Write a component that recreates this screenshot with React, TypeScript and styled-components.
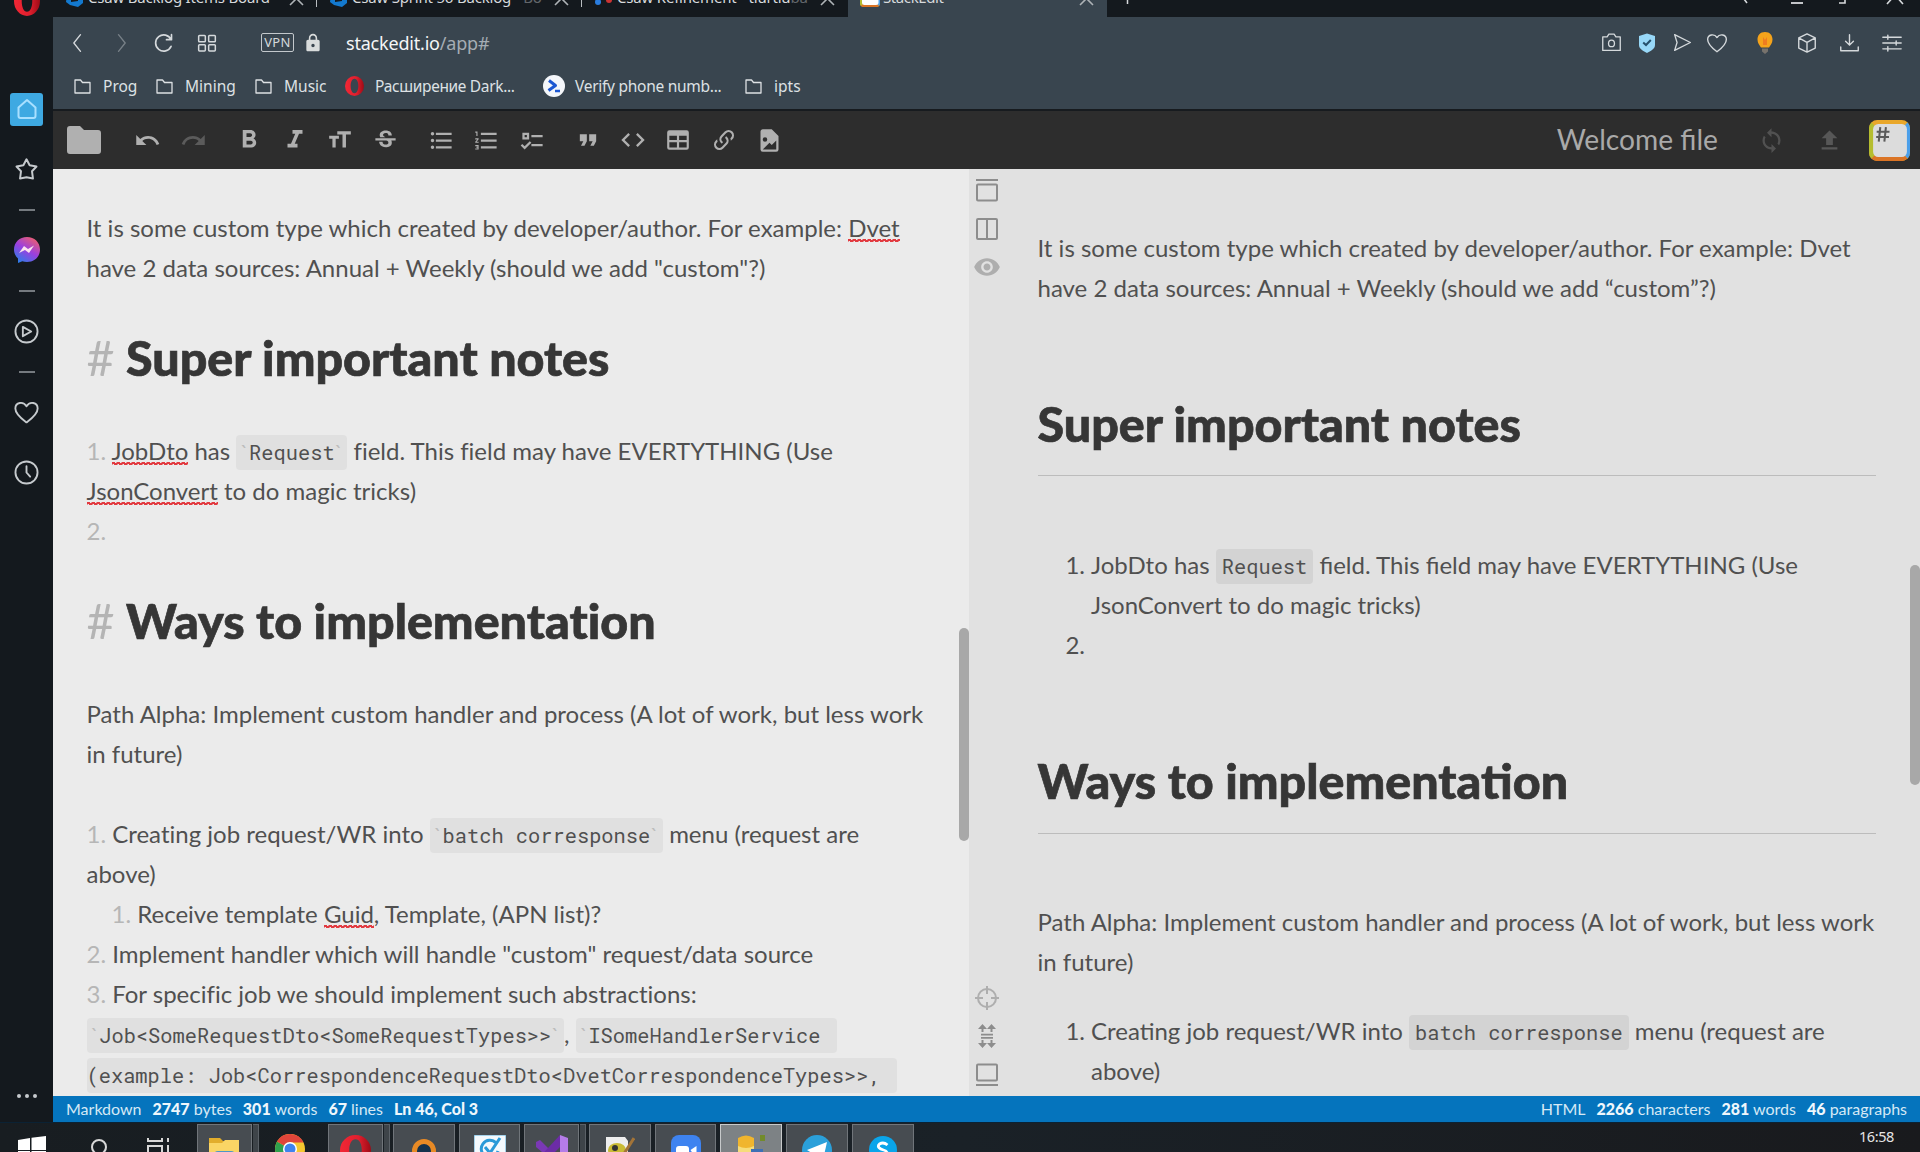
import React from "react";
import styled, { createGlobalStyle, css } from "styled-components";
import {
  MdUndo, MdRedo, MdFormatBold, MdFormatItalic, MdStrikethroughS,
  MdFormatListBulleted, MdFormatListNumbered, MdFormatQuote, MdCode, MdRemoveRedEye, MdSync,
  MdLock,
} from "react-icons/md";

const ui = `"Noto Sans", "Open Sans", sans-serif`;
const lato = `Lato, "Open Sans", sans-serif`;
const mono = `"Roboto Mono", "DejaVu Sans Mono", monospace`;

const Global = createGlobalStyle`
  * { box-sizing: border-box; }
  html, body { margin: 0; height: 1152px; overflow: hidden; background: #14181c; }
  svg { display: block; flex: none; }
`;

const Screen = styled.div`
  width: 1920px; height: 1152px; display: flex; flex-direction: column; overflow: hidden;
`;
const Browser = styled.div`
  height: 1122px; display: flex; background: #14191e;
`;
const Side = styled.nav`
  width: 53px; flex: none; display: flex; flex-direction: column; align-items: center;
  overflow: hidden; color: #c6cace;
`;
const SideSlot = styled.div<{ $h: number }>`
  height: ${(p) => p.$h}px; width: 52px; display: flex; align-items: center; justify-content: center; flex: none;
`;
const SideLogo = styled.div`margin-top: -12px;`;
const Dash = styled.div`width: 16px; height: 2px; background: #757a7f;`;
const HomeTile = styled.div`
  width: 33px; height: 33px; border-radius: 3px; background: #3ea9e2; display: grid; place-items: center;
`;
const Spacer = styled.div`flex: 1;`;
const Gap = styled.div<{ $h: number }>`height: ${(p) => p.$h}px; flex: none;`;
const Main = styled.div`flex: 1; display: flex; flex-direction: column; min-width: 0;`;

const Tabs = styled.div`
  height: 17px; flex: none; display: flex; overflow: hidden; background: #14191e; color: #d7dadd;
  font: 15px/24px ${ui};
`;
const Tab = styled.div<{ $w: number; $active?: boolean; $sep?: boolean }>`
  width: ${(p) => p.$w}px; height: 17px; flex: none; display: flex; align-items: flex-start; padding-left: 12px;
  position: relative; background: ${(p) => (p.$active ? "#39454f" : "transparent")};
  ${(p) => p.$sep && css`&::after { content: ""; position: absolute; right: 0; top: 0; width: 1px; height: 7px; background: #b9bdc1; }`}
`;
const TabLabel = styled.span<{ $ls?: number }>`
  margin: -15px 0 0 3px; white-space: nowrap; letter-spacing: ${(p) => p.$ls ?? 0}px;
  i { font-style: normal; opacity: 0.4; }
`;
const TabIcon = styled.div`margin-top: -13px; width: 20px; height: 20px;`;
const TabClose = styled.div`margin-top: -10px; margin-left: auto; padding-right: 12px; color: #aeb3b7;`;
const WinButtons = styled.div`
  margin-left: auto; display: flex; height: 17px; width: 190px; justify-content: space-between; padding: 0 16px 0 12px;
`;

const AddressBar = styled.div`
  height: 51px; flex: none; background: #39454f; display: flex; align-items: center; color: #d5d9dc;
`;
const Slot = styled.div<{ $w: number; $opacity?: number }>`
  width: ${(p) => p.$w}px; flex: none; display: flex; justify-content: center; align-items: center;
  opacity: ${(p) => p.$opacity ?? 1};
`;
const Vpn = styled.div`
  width: 33px; height: 19px; border: 1px solid #c3c8cc; border-radius: 2px; font: 13px/17px ${ui};
  text-align: center; letter-spacing: 0.4px; margin-left: 36px; flex: none; margin-top: -1px;
`;
const Url = styled.div`
  font: 18px/24px ${ui}; color: #f4f6f7; letter-spacing: -0.2px; margin-left: 14px; white-space: nowrap;
  span { color: #a5adb4; }
`;
const Bookmarks = styled.div`
  height: 41px; flex: none; background: #39454f; display: flex; align-items: center; padding: 0 0 5px 21px;
  font: 15.5px/20px ${ui}; color: #dde1e4;
`;
const Bookmark = styled.div<{ $w: number; $gap: number; $ls?: number }>`
  width: ${(p) => p.$w}px; flex: none; display: flex; align-items: center; gap: ${(p) => p.$gap}px; white-space: nowrap;
  letter-spacing: ${(p) => p.$ls ?? 0}px;
`;

const Toolbar = styled.div`
  height: 60px; flex: none; background: #2d2d2d; border-top: 2px solid #171b1f; display: flex; align-items: center;
  color: #b0b0b0;
`;
const Title = styled.div`
  font: 28.2px/40px ${lato}; color: #a9a9a9; margin: -2px 24px 0 auto; white-space: nowrap;
`;

const Work = styled.div`height: 927px; flex: none; display: flex; overflow: hidden;`;
const Editor = styled.section`
  width: 916px; flex: none; background: #ebebeb; padding: 39px 0 0 33.5px; position: relative; overflow: hidden;
  font-variant-ligatures: none;
`;
const Nav = styled.aside`
  width: 36px; flex: none; display: flex; flex-direction: column; align-items: center; color: #8d8d8d;
  padding: 2px 0 2px;
`;
const NavSlot = styled.div<{ $faint?: boolean }>`
  height: 38.4px; display: grid; place-items: center; flex: none; opacity: ${(p) => (p.$faint ? 0.6 : 1)};
`;
const Preview = styled.section`
  flex: 1; display: flex; background: #e1e1e1; position: relative; overflow: hidden;
`;
const Article = styled.article`width: 838px; margin-left: 32.5px; padding-top: 59px; flex: none;`;
const Thumb = styled.div<{ $top: number; $h: number }>`
  position: absolute; right: 0; top: ${(p) => p.$top}px; height: ${(p) => p.$h}px; width: 10px; border-radius: 5px;
  background: #a8a8a8;
`;
const Line = styled.div<{ $indent?: number }>`
  height: 40px; font-family: ${lato}; font-size: 24px; line-height: 40px; color: #505050; white-space: pre;
  padding-left: ${(p) => p.$indent ?? 0}px;
`;
const Heading = styled.h1<{ $top: number; $bottom: number }>`
  margin: ${(p) => p.$top}px 0 ${(p) => p.$bottom}px; height: 63px; font-family: ${lato}; font-weight: 900;
  font-size: 48.4px; line-height: 63px; color: #363636; white-space: pre; -webkit-text-stroke: 0.7px #363636;
  span { font-weight: 400; color: #b4b4b4; -webkit-text-stroke: 0; }
`;
const Rule = styled.hr`border: 0; height: 1px; margin: 0; background: #bcbcbc;`;
const Mark = styled.span`color: #b6b6b6;`;
const Typo = styled.span`
  background-image:
    linear-gradient(45deg, transparent 36%, #e23a40 36%, #e23a40 64%, transparent 64%),
    linear-gradient(-45deg, transparent 36%, #e23a40 36%, #e23a40 64%, transparent 64%);
  background-size: 5px 3px, 5px 3px;
  background-position: 0 100%, 2.5px 100%;
  background-repeat: repeat-x;
`;
const Code = styled.code<{ $cont?: boolean; $dark?: boolean }>`
  font-family: ${mono}; font-size: 20.36px; line-height: 28px;
  background: ${(p) => (p.$dark ? "#d3d3d3" : "#e0e0e0")};
  border-radius: 4px; padding: 4px ${(p) => (p.$dark ? 6 : 4)}px 4px ${(p) => (p.$cont ? 0 : p.$dark ? 6 : 4)}px;
`;
const Tick = styled.span`color: #bcbcbc; font-family: ${lato}; letter-spacing: 0.6px;`;
const List = styled.ol`margin: 0; padding: 0; list-style: none;`;
const Item = styled.li`display: flex;`;
const Num = styled.span`
  width: 53.5px; padding-right: 6px; text-align: right; font: 24px/40px ${lato}; color: #505050; flex: none;
`;

const Status = styled.div`
  height: 26px; flex: none; background: #0574bd; color: #d5e9f5; font: 16px/26px ${lato}; display: flex;
  justify-content: space-between; padding: 0 13px;
  div { display: flex; gap: 11px; white-space: pre; }
  b { font-weight: 900; color: #eef7fc; }
`;

const Taskbar = styled.footer`
  height: 30px; flex: none; display: flex; background: linear-gradient(90deg, #181d21, #1a2127 50%, #191a1d);
  overflow: hidden; border-top: 1px solid #0b2234;
`;
const Task = styled.div<{ $w: number; $gap?: number; $open?: boolean; $active?: boolean; $stack?: boolean }>`
  width: ${(p) => p.$w}px; margin-right: ${(p) => p.$gap ?? 0}px; height: 40px; flex: none; display: flex;
  justify-content: center; padding-top: 10px; position: relative; margin-top: 1px;
  ${(p) => p.$open && css`background: #474c51; border: 1px solid #70757a; border-bottom: 0;`}
  ${(p) => p.$active && css`background: #7d8285; border-color: #c7cacb;`}
  ${(p) => p.$stack && css`&::after { content: ""; position: absolute; left: 100%; margin-left: 2px; top: -1px; width: 5px; height: 40px; background: #3e4449; border: 1px solid #5b6167; border-left: 0; }`}
`;
const Clock = styled.div`margin: 3px 26px 0 auto; font: 14.5px/20px ${ui}; color: #e5e5e5; letter-spacing: -0.4px;`;

const L = ({ s = 22, w = 1.6, children }: { s?: number; w?: number; children: React.ReactNode }) => (
  <svg width={s} height={s} viewBox="0 0 24 24" fill="none" stroke="currentColor" strokeWidth={w} strokeLinejoin="round" strokeLinecap="round">{children}</svg>
);
const FolderLine = () => (
  <svg width="17" height="15" viewBox="0 0 17 15" fill="none" stroke="currentColor" strokeWidth="1.3" strokeLinejoin="round"><path d="M1 1h5.5l2 2.500H16V14H1z" /></svg>
);
const OperaO = ({ w, h }: { w: number; h: number }) => (
  <svg width={w} height={h} viewBox="0 0 32 32" preserveAspectRatio="none">
    <defs><linearGradient id="op" x1="0" x2="1"><stop offset="0" stopColor="#f32735" /><stop offset=".6" stopColor="#df1f2e" /><stop offset="1" stopColor="#9d0b16" /></linearGradient></defs>
    <path fill="url(#op)" fillRule="evenodd" d="M16 0a16 16 0 1 0 0 32 16 16 0 0 0 0-32zm0 4.500c4 0 6.500 5 6.500 11.500S20 27.500 16 27.500 9.500 22.500 9.500 16 12 4.500 16 4.500z" />
  </svg>
);
const Azure = () => (
  <svg width="20" height="20" viewBox="0 0 20 20"><path fill="#1379cf" d="M2 6l8-5 8 1v14l-5 4-8-2-4-3z" /><path d="M6 6l7-1v9l-7 1z" fill="#14191e" /></svg>
);
const Cross = () => (
  <svg width="17" height="17" viewBox="0 0 17 17" stroke="currentColor" strokeWidth="1.6"><path d="M2 2l13 13M15 2L2 15" /></svg>
);
const StackLogo = ({ s, id }: { s: number; id: string }) => (
  <svg width={s} height={s} viewBox="0 0 40 40">
    <defs><clipPath id={id}><rect width="40" height="40" rx="8" /></clipPath></defs>
    <g clipPath={`url(#${id})`}>
      <rect width="40" height="40" fill="#e9a72a" />
      <path d="M0 0l8 8v24l-8 8z" fill="#b5bd2f" /><path d="M40 0l-8 8v24l8 8z" fill="#4b9fea" /><path d="M0 40l8-8h24l8 8z" fill="#db7425" />
      <rect x="4" y="4" width="33" height="32" rx="5" fill={s > 30 ? "#dcdcdc" : "#ffffff"} />
    </g>
    {s > 30 && <path d="M11 7l-1.500 14M16.500 7l-1.500 14M7.500 11.500h12.500M7 16.500h12.500" stroke="#5b5b5b" strokeWidth="2" fill="none" />}
  </svg>
);

const SideBar = () => (
  <Side>
    <SideSlot $h={14}><SideLogo><OperaO w={26} h={30} /></SideLogo></SideSlot>
    <SideSlot $h={70} />
    <SideSlot $h={50}><HomeTile><L s={24} w={2}><path d="M3.500 10.500L12 3l8.500 7.500V19a2 2 0 0 1-2 2h-13a2 2 0 0 1-2-2z" stroke="#a8e0ff" /></L></HomeTile></SideSlot>
    <SideSlot $h={71}><L s={25} w={1.9}><path d="M12 2.200l3 5.700 6.600 1.200-4.300 4.600.9 7-6.200-1.200-6.200 1.200.9-7L2.400 9.100 9 7.900z" /></L></SideSlot>
    <SideSlot $h={10}><Dash /></SideSlot>
    <SideSlot $h={70}>
      <svg width="28" height="28" viewBox="0 0 28 28">
        <defs><linearGradient id="ms" x1=".2" y1="1" x2=".8" y2="0"><stop offset="0" stopColor="#2a7fe8" /><stop offset=".5" stopColor="#9a3fe0" /><stop offset="1" stopColor="#f0606a" /></linearGradient></defs>
        <path fill="url(#ms)" d="M14 1C6.500 1 1 6.300 1 13.500c0 3.800 1.500 6.700 4 8.900V27l4.300-1.800c1.500.5 3 .8 4.700.8 7.500 0 13-5.300 13-12.500S21.500 1 14 1z" />
        <path fill="#fbe3ee" d="M6 17l5-7 4 3 6-3.500-5 7.500-4-3z" />
      </svg>
    </SideSlot>
    <SideSlot $h={12}><Dash /></SideSlot>
    <SideSlot $h={69}><L s={25} w={1.8}><circle cx="12" cy="12" r="10.600" /><path d="M8.500 7.500l8 4.500-8 4.500z" /></L></SideSlot>
    <SideSlot $h={12}><Dash /></SideSlot>
    <SideSlot $h={69}><L s={25} w={1.8}><path d="M12 21.500C8 18.500 1.300 14 1.300 8.200 1.300 2 9 1 12 6c3-5 10.700-4 10.700 2.200C22.700 14 16 18.500 12 21.500z" /></L></SideSlot>
    <SideSlot $h={51}><L s={25} w={1.8}><circle cx="12" cy="12" r="10.600" /><path d="M12 6v6l3.500 4" /></L></SideSlot>
    <Spacer />
    <SideSlot $h={52}><svg width="22" height="6" viewBox="0 0 22 6" fill="currentColor"><circle cx="3" cy="3" r="2" /><circle cx="11" cy="3" r="2" /><circle cx="19" cy="3" r="2" /></svg></SideSlot>
  </Side>
);

const TabStrip = () => (
  <Tabs>
    <Tab $w={264} $sep><TabIcon><Azure /></TabIcon><TabLabel $ls={-0.2}>Csaw Backlog Items Board</TabLabel><TabClose><Cross /></TabClose></Tab>
    <Tab $w={265} $sep><TabIcon><Azure /></TabIcon><TabLabel $ls={-0.2}>Csaw Sprint 56 Backlog <i>- Bo</i></TabLabel><TabClose><Cross /></TabClose></Tab>
    <Tab $w={266}>
      <TabIcon><svg width="20" height="20" viewBox="0 0 20 20"><circle cx="4" cy="15" r="3" fill="#2a7de0" /><circle cx="15" cy="13" r="3" fill="#c33" /></svg></TabIcon>
      <TabLabel $ls={-0.2}>Csaw Refinement - tiurtiu<i>ba</i></TabLabel><TabClose><Cross /></TabClose>
    </Tab>
    <Tab $w={259} $active><TabIcon><StackLogo s={20} id="tabl" /></TabIcon><TabLabel $ls={-0.4}>StackEdit</TabLabel><TabClose><Cross /></TabClose></Tab>
    <Tab $w={40}><svg width="20" height="8" viewBox="0 0 20 8" stroke="currentColor" strokeWidth="1.500"><path d="M8.500 0v4" /></svg></Tab>
    <WinButtons>
      <svg width="16" height="8" fill="none" stroke="currentColor" strokeWidth="1.600"><path d="M-1-5l6 8" /></svg>
      <svg width="16" height="8" stroke="currentColor" strokeWidth="1.800"><path d="M-4 3h16" /></svg>
      <svg width="14" height="8" fill="none" stroke="currentColor" strokeWidth="1.600"><path d="M-5-8v11h11V-8" /></svg>
      <svg width="18" height="8" fill="none" stroke="currentColor" strokeWidth="1.600"><path d="M1 4l8-9 8 9" /></svg>
    </WinButtons>
  </Tabs>
);

const Address = () => (
  <AddressBar>
    <Slot $w={50}><L s={20}><path d="M15 2L7 12l8 10" /></L></Slot>
    <Slot $w={36} $opacity={0.4}><L s={20}><path d="M9 2l8 10L9 22" /></L></Slot>
    <Slot $w={50}><L s={20} w={2}><path d="M20.500 16a9.700 9.700 0 1 1 0-8M21 2v6h-6" /></L></Slot>
    <Slot $w={36}><L s={20} w={1.8}><rect x="2" y="3" width="8" height="7.500" rx="1" /><rect x="14" y="3" width="8" height="7.500" rx="1" /><rect x="2" y="14" width="8" height="7.500" rx="1" /><rect x="14" y="14" width="8" height="7.500" rx="1" /></L></Slot>
    <Vpn>VPN</Vpn>
    <Slot $w={38}><MdLock size={20} color="#d9dcdc" /></Slot>
    <Url>stackedit.io<span>/app#</span></Url>
    <Spacer />
    <Slot $w={38}><L s={21} w={1.5}><path d="M2 5.500h5L9 2.500h6l2 3h5V21H2z" /><ellipse cx="12" cy="13" rx="3.400" ry="3.800" /></L></Slot>
    <Slot $w={33}><svg width="18" height="20" viewBox="0 0 18 20"><path fill="#98d8f8" d="M9 .5L17 3v9c0 4-4.500 6-8 8-3.500-2-8-4-8-8V3z" /><path d="M5.200 9.500L8 12l4.800-5" stroke="#26506c" strokeWidth="2" fill="none" /></svg></Slot>
    <Slot $w={38}><L s={21} w={1.5}><path d="M3 3l18 9-18 9 2.800-9z" /></L></Slot>
    <Slot $w={31}><L s={22} w={1.5}><path d="M12 21.500C8 18.500 1.800 14 1.800 8.200 1.800 2.500 9 1.500 12 6c3-4.500 10.200-3.500 10.200 2.200C22.200 14 16 18.500 12 21.500z" /></L></Slot>
    <Slot $w={65}><svg width="18" height="22" viewBox="0 0 18 22"><path fill="#f5a31b" d="M9 0c5 0 7.500 3.500 7.500 7.500 0 3.500-2 5.500-3.500 8H5c-1.500-2.500-3.500-4.500-3.500-8C1.500 3.500 4 0 9 0z" /><path d="M7 5l2 3 2-3v8H7z" fill="#ee7c20" /><path fill="#77726c" d="M6 16.500h6v3L9 22l-3-2.500z" /></svg></Slot>
    <Slot $w={19}><L s={22} w={1.5}><path d="M12 2l9 4.500v11L12 22l-9-4.500v-11zM3 6.500l9 4.800 9-4.800M12 11.300V22" /></L></Slot>
    <Slot $w={66}><L s={21} w={1.6}><path d="M12 3v12M7.500 10.500L12 15l4.500-4.500M2 17v4.500h20V17" /></L></Slot>
    <Slot $w={20}><L s={20} w={1.7}><path d="M1 5h22M1 12h22M1 19h22M7 2.500v5M17 9.500v5M7 16.500v5" /></L></Slot>
    <Slot $w={18} />
  </AddressBar>
);

const BookmarkBar = () => (
  <Bookmarks>
    <Bookmark $w={82} $gap={12}><FolderLine />Prog</Bookmark>
    <Bookmark $w={99} $gap={12}><FolderLine />Mining</Bookmark>
    <Bookmark $w={90} $gap={12}><FolderLine />Music</Bookmark>
    <Bookmark $w={198} $gap={11} $ls={-0.33}><OperaO w={19} h={20} />Расширение Dark...</Bookmark>
    <Bookmark $w={202} $gap={10} $ls={-0.27}>
      <svg width="22" height="22" viewBox="0 0 22 22"><circle cx="11" cy="11" r="11" fill="#f4f6fa" /><path d="M6 5.500l6.500 5-7 5" stroke="#1c57d2" strokeWidth="3" fill="none" strokeLinejoin="round" /><path d="M12 16h5" stroke="#1c57d2" strokeWidth="2.500" /></svg>
      Verify phone numb...
    </Bookmark>
    <Bookmark $w={80} $gap={12}><FolderLine />ipts</Bookmark>
  </Bookmarks>
);

const SizeIcon = () => (
  <svg width="26" height="26" viewBox="0 0 24 24" fill="currentColor"><path d="M2 8h9v2.800H8V19H5v-8.200H2zM9.500 4H22v3h-4.500v12h-3.200V7H9.500z" /></svg>
);
const ChecksIcon = () => (
  <svg width="27" height="27" viewBox="0 0 24 24" fill="currentColor"><path fillRule="evenodd" d="M3 5h6v6H3zm2 2v2h2V7zM11 7h10v2H11zM11 15h10v2H11zM5 20l-3.500-3.500 1.410-1.410L5 17.170l4.590-4.580L11 14z" /></svg>
);
const TableIcon = () => (
  <svg width="26" height="26" viewBox="0 0 24 24" fill="currentColor"><path d="M4 3h16a2 2 0 0 1 2 2v14a2 2 0 0 1-2 2H4a2 2 0 0 1-2-2V5a2 2 0 0 1 2-2zm0 5v4h7V8zm9 0v4h7V8zm-9 6v5h7v-5zm9 0v5h7v-5z" fillRule="evenodd" /></svg>
);
const LinkIcon = () => (
  <svg width="26" height="26" viewBox="0 0 24 24" fill="currentColor"><path d="M10.590 13.410c.41.390.41 1.030 0 1.420-.39.390-1.030.390-1.420 0a5.003 5.003 0 0 1 0-7.070l3.540-3.540a5.003 5.003 0 0 1 7.070 0 5.003 5.003 0 0 1 0 7.070l-1.490 1.490c.01-.82-.12-1.640-.4-2.420l.47-.48a2.982 2.982 0 0 0 0-4.240 2.982 2.982 0 0 0-4.240 0l-3.530 3.530a2.982 2.982 0 0 0 0 4.240m2.820-4.240c.39-.39 1.030-.39 1.420 0a5.003 5.003 0 0 1 0 7.070l-3.540 3.540a5.003 5.003 0 0 1-7.070 0 5.003 5.003 0 0 1 0-7.070l1.490-1.490c-.01.82.12 1.640.4 2.430l-.47.47a2.982 2.982 0 0 0 0 4.240 2.982 2.982 0 0 0 4.240 0l3.530-3.530a2.982 2.982 0 0 0 0-4.240.973.973 0 0 1 0-1.420z" /></svg>
);
const FileImage = () => (
  <svg width="27" height="27" viewBox="0 0 24 24" fill="currentColor"><path fillRule="evenodd" d="M6 2h8l6 6v12a2 2 0 0 1-2 2H6a2 2 0 0 1-2-2V4c0-1.100.9-2 2-2zm0 18h12v-8l-4 4-2-2zM8 9a2 2 0 0 0-2 2 2 2 0 0 0 2 2 2 2 0 0 0 2-2 2 2 0 0 0-2-2z" /></svg>
);

const EditorToolbar = () => (
  <Toolbar>
    <Slot $w={62}><svg width="34" height="28" viewBox="0 0 34 28" fill="#b0b0b0"><path d="M3 0h10l4 4h14a3 3 0 0 1 3 3v18a3 3 0 0 1-3 3H3a3 3 0 0 1-3-3V3a3 3 0 0 1 3-3z" /></svg></Slot>
    <Slot $w={65}><MdUndo size={27} /></Slot>
    <Slot $w={26} $opacity={0.35}><MdRedo size={27} /></Slot>
    <Slot $w={86}><MdFormatBold size={30} /></Slot>
    <Slot $w={6}><MdFormatItalic size={30} /></Slot>
    <Slot $w={84}><SizeIcon /></Slot>
    <Slot $w={6}><MdStrikethroughS size={27} /></Slot>
    <Slot $w={8} />
    <Slot $w={90}><MdFormatListBulleted size={27} /></Slot>
    <Slot $w={1}><MdFormatListNumbered size={27} /></Slot>
    <Slot $w={90}><ChecksIcon /></Slot>
    <Slot $w={22}><MdFormatQuote size={28} /></Slot>
    <Slot $w={68}><MdCode size={28} /></Slot>
    <Slot $w={22}><TableIcon /></Slot>
    <Slot $w={69}><LinkIcon /></Slot>
    <Slot $w={22}><FileImage /></Slot>
    <Title>Welcome file</Title>
    <Slot $w={58} $opacity={0.28}><MdSync size={27} /></Slot>
    <Slot $w={59} $opacity={0.32}><svg width="27" height="27" viewBox="0 0 24 24" fill="currentColor"><path d="M9 16v-6H5l7-7 7 7h-4v6zm-4 4v-2h14v2z" /></svg></Slot>
    <Slot $w={61}><StackLogo s={41} id="big" /></Slot>
  </Toolbar>
);

const EditorPane = () => (
  <Editor>
    <Line>It is some custom type which created by developer/author. For example: <Typo>Dvet</Typo></Line>
    <Line>have 2 data sources: Annual + Weekly (should we add "custom"?)</Line>
    <Heading $top={38} $bottom={42}><span>#</span> Super important notes</Heading>
    <Line><Mark>1. </Mark><Typo>JobDto</Typo> has <Code><Tick>`</Tick>Request<Tick>`</Tick></Code> field. This field may have EVERTYTHING (Use</Line>
    <Line><Typo>JsonConvert</Typo> to do magic tricks)</Line>
    <Line><Mark>2. </Mark></Line>
    <Heading $top={38} $bottom={42}><span>#</span> Ways to implementation</Heading>
    <Line>Path Alpha: Implement custom handler and process (A lot of work, but less work</Line>
    <Line>in future)</Line>
    <Line> </Line>
    <Line><Mark>1. </Mark>Creating job request/WR into <Code><Tick>`</Tick>batch corresponse<Tick>`</Tick></Code> menu (request are</Line>
    <Line>above)</Line>
    <Line $indent={25}><Mark>1. </Mark>Receive template <Typo>Guid</Typo>, Template, (APN list)?</Line>
    <Line><Mark>2. </Mark>Implement handler which will handle "custom" request/data source</Line>
    <Line><Mark>3. </Mark>For specific job we should implement such abstractions:</Line>
    <Line><Code><Tick>`</Tick>Job&lt;SomeRequestDto&lt;SomeRequestTypes&gt;&gt;<Tick>`</Tick></Code>, <Code><Tick>`</Tick>ISomeHandlerService </Code></Line>
    <Line><Code $cont>(example: Job&lt;CorrespondenceRequestDto&lt;DvetCorrespondenceTypes&gt;&gt;, </Code></Line>
    <Thumb $top={459} $h={213} />
  </Editor>
);

const PreviewPane = () => (
  <Preview>
    <Nav>
      <NavSlot><svg width="24" height="24" fill="none" stroke="currentColor" strokeWidth="2"><path d="M1 2h22" /><rect x="2" y="6.500" width="20" height="16" rx="1" /></svg></NavSlot>
      <NavSlot><svg width="24" height="24" fill="none" stroke="currentColor" strokeWidth="2"><rect x="2" y="2" width="20" height="20" rx="1" /><path d="M12 2v20" /></svg></NavSlot>
      <NavSlot $faint><MdRemoveRedEye size={28} /></NavSlot>
      <Spacer />
      <NavSlot $faint><svg width="26" height="26" viewBox="0 0 26 26" fill="none" stroke="currentColor" strokeWidth="2"><circle cx="13" cy="13" r="9" /><path d="M13 1v8M13 17v8M1 13h8M17 13h8" /></svg></NavSlot>
      <NavSlot><svg width="24" height="26" viewBox="0 0 24 26" fill="currentColor"><path d="M7.500 1l4.500 5H8.500v3h-2V6H3zM16.500 1l4.500 5h-3.500v3h-2V6H12zM6 10.800h12v1.700H6zM6 14h12v1.700H6zM7.500 25L3 20h3.500v-3h2v3H12zM16.500 25L12 20h3.500v-3h2v3H21z" /></svg></NavSlot>
      <NavSlot><svg width="24" height="24" fill="none" stroke="currentColor" strokeWidth="2"><rect x="2" y="1.500" width="20" height="16" rx="1" /><path d="M1 22h22" /></svg></NavSlot>
    </Nav>
    <Article>
      <Line>It is some custom type which created by developer/author. For example: Dvet</Line>
      <Line>have 2 data sources: Annual + Weekly (should we add “custom”?)</Line>
      <Heading $top={84} $bottom={20}>Super important notes</Heading>
      <Rule />
      <Gap $h={69} />
      <List>
        <Item><Num>1.</Num><Line>JobDto has <Code $dark>Request</Code> field. This field may have EVERTYTHING (Use</Line></Item>
        <Item><Num /><Line>JsonConvert to do magic tricks)</Line></Item>
        <Item><Num>2.</Num></Item>
      </List>
      <Heading $top={84} $bottom={21}>Ways to implementation</Heading>
      <Rule />
      <Gap $h={68} />
      <Line>Path Alpha: Implement custom handler and process (A lot of work, but less work</Line>
      <Line>in future)</Line>
      <Gap $h={29} />
      <List>
        <Item><Num>1.</Num><Line>Creating job request/WR into <Code $dark>batch corresponse</Code> menu (request are</Line></Item>
        <Item><Num /><Line>above)</Line></Item>
      </List>
    </Article>
    <Thumb $top={396} $h={220} />
  </Preview>
);

const TaskRow = () => (
  <Taskbar>
    <Task $w={64}><svg width="28" height="28" viewBox="0 0 28 28" fill="#fff"><path d="M0 6l12-2v12H0zM13.500 3.800L28 2v14H13.500zM0 17h12v10H0zM13.500 17H28v12H13.500z" /></svg></Task>
    <Task $w={70}><svg width="20" height="28" viewBox="0 -5 20 28" fill="none" stroke="#d8d8d8" strokeWidth="2"><circle cx="10" cy="8" r="7" /><path d="M6 15l-5 7" /></svg></Task>
    <Task $w={50} $gap={13}><svg width="24" height="28" viewBox="0 -4 24 28" fill="none" stroke="#d8d8d8" strokeWidth="2"><path d="M1 0v3h14V0M1 20V8h14v12M21 0v4M21 7v12" /></svg></Task>
    <Task $w={55} $gap={5} $open $stack><svg width="31" height="31" viewBox="0 -1 31 31"><path fill="#e2ad2c" d="M0 2h11l3 3h16v4H0z" /><path fill="#fad565" d="M0 7h13l3-3h14v26H0z" /><path fill="#4f97c5" d="M5 19q0-4 4-4h13q4 0 4 4v11H5z" /></svg></Task>
    <Task $w={66} $gap={5}><svg width="30" height="30" viewBox="0 0 30 30"><circle cx="15" cy="15" r="15" fill="#f5c72f" /><path d="M15 15L2 7.500A15 15 0 0 0 10 29z" fill="#2fa04e" /><path d="M15 15L2 7.500a15 15 0 0 1 26.500 1H15z" fill="#e0453a" /><circle cx="15" cy="15" r="7" fill="#fff" /><circle cx="15" cy="15" r="5.500" fill="#3f83ee" /></svg></Task>
    <Task $w={55} $gap={10} $open $stack><OperaO w={31} h={30} /></Task>
    <Task $w={62} $gap={4} $open><svg width="26" height="31" viewBox="0 -3 26 31"><circle cx="13" cy="13" r="9.500" stroke="#e88a25" strokeWidth="5" fill="#15324d" /></svg></Task>
    <Task $w={61} $gap={4} $open><svg width="32" height="32" viewBox="0 0 32 32"><rect width="32" height="32" fill="#f4f9fd" stroke="#59abd8" /><path d="M22 8a8.500 8.500 0 1 0 2 8M11 12l5 6 10-15" stroke="#2a9ad8" strokeWidth="3" fill="none" /></svg></Task>
    <Task $w={55} $gap={10} $open $stack><svg width="32" height="32" viewBox="0 0 32 32"><path fill="#7a38b5" d="M0 7l4-2 20 20v7L0 12z" /><path fill="#b57ce8" d="M24 0l8 3v28h-8z" /><path fill="#6c2ca6" d="M24 0v12L6 30l-6-4z" /></svg></Task>
    <Task $w={62} $gap={4} $open><svg width="30" height="31" viewBox="0 -2 30 31"><path fill="#eee" d="M1 0h19l3 4v26H1z" /><ellipse cx="12" cy="13" rx="9" ry="7" fill="#c9bb35" /><circle cx="10" cy="11" r="3" fill="#333" /><path d="M17 20L29 1" stroke="#a37438" strokeWidth="3" /><path d="M5 18h14" stroke="#4a4a2a" strokeWidth="3" /></svg></Task>
    <Task $w={61} $gap={4} $open><svg width="30" height="30" viewBox="0 0 30 30"><rect width="30" height="34" rx="8" fill="#3e83f0" /><rect x="5" y="11" width="13" height="14" rx="3" fill="#fff" /><path fill="#fff" d="M19.500 15l6-4v13z" /></svg></Task>
    <Task $w={62} $gap={4} $open $active><svg width="30" height="30" viewBox="0 0 30 30"><path fill="#f0b52e" d="M2 3q8-5 16 0v27H2z" /><path fill="#f6dc7a" d="M2 11q8 4 16 0v6q-8 4-16 0z" /><path fill="#3e6fb5" d="M15 14h12v16H15z" /><path fill="#728b2b" d="M24 0h5v6h-5z" /></svg></Task>
    <Task $w={62} $gap={4} $open><svg width="30" height="30" viewBox="0 0 30 30"><circle cx="15" cy="15" r="15" fill="#2ba0da" /><path fill="#fff" d="M5 15l20-8-4 18-8-5z" /></svg></Task>
    <Task $w={62} $open><svg width="30" height="30" viewBox="0 0 30 30"><circle cx="15" cy="15" r="14" fill="#0aa5ea" /><path d="M19.500 10q-4-3.500-8-1c-3 3 .5 5 4 6 4 1 5 4 1.500 6-3 1.500-6 0-7.500-2" stroke="#fff" strokeWidth="2.800" fill="none" /></svg></Task>
    <Clock>16:58</Clock>
  </Taskbar>
);

export default function App() {
  return (
    <Screen>
      <Global />
      <Browser>
        <SideBar />
        <Main>
          <TabStrip />
          <Address />
          <BookmarkBar />
          <EditorToolbar />
          <Work><EditorPane /><PreviewPane /></Work>
          <Status>
            <div><span>Markdown</span><span><b>2747</b> bytes</span><span><b>301</b> words</span><span><b>67</b> lines</span><b>Ln 46, Col 3</b></div>
            <div><span>HTML</span><span><b>2266</b> characters</span><span><b>281</b> words</span><span><b>46</b> paragraphs</span></div>
          </Status>
        </Main>
      </Browser>
      <TaskRow />
    </Screen>
  );
}
